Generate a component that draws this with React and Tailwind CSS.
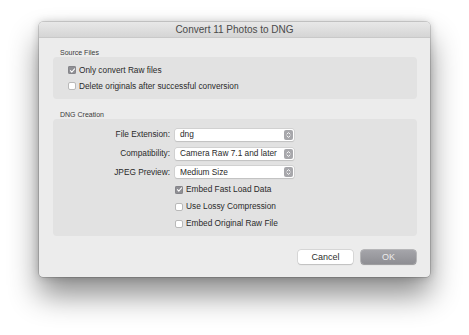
import React from 'react';

function Checkbox({ checked }) {
    return checked ? (
        <span className="flex h-[8px] w-[8px] items-center justify-center rounded-[2px] bg-[#8f8f94] shadow-[inset_0_0_0_0.5px_#7a7a7f]">
            <svg viewBox="0 0 8 8" className="h-[7px] w-[7px]">
                <path d="M1.6 4.2 L3.2 5.8 L6.4 2.2" fill="none" stroke="#fff" strokeWidth="1.2" strokeLinecap="round" strokeLinejoin="round" />
            </svg>
        </span>
    ) : (
        <span className="block h-[8px] w-[8px] rounded-[2px] border border-[#b9b9b9] bg-white" />
    );
}

function CheckRow({ checked, label, className = '' }) {
    return (
        <div className={`flex items-center gap-[3px] ${className}`}>
            <Checkbox checked={checked} />
            <span className="text-[8.3px] leading-none text-[#2a2a2a]">{label}</span>
        </div>
    );
}

function Select({ value }) {
    return (
        <div className="flex h-[12px] w-[119px] items-center justify-between rounded-[2px] bg-white pl-[5px] pr-[1px] shadow-[0_0_0_0.5px_#c4c4c4,0_0.5px_1px_rgba(0,0,0,0.15)]">
            <span className="text-[8.3px] leading-none text-[#2a2a2a]">{value}</span>
            <span className="flex h-[10px] w-[9px] items-center justify-center rounded-[2px] bg-[#a7a7ab]">
                <svg viewBox="0 0 9 10" className="h-[10px] w-[9px]">
                    <path d="M3 4 L4.5 2.6 L6 4" fill="none" stroke="#fff" strokeWidth="0.9" strokeLinecap="round" strokeLinejoin="round" />
                    <path d="M3 6 L4.5 7.4 L6 6" fill="none" stroke="#fff" strokeWidth="0.9" strokeLinecap="round" strokeLinejoin="round" />
                </svg>
            </span>
        </div>
    );
}

function SelectRow({ label, value, className = '' }) {
    return (
        <div className={`flex items-center gap-[5px] ${className}`}>
            <span className="w-[117px] text-right text-[8.3px] leading-none text-[#2a2a2a]">{label}</span>
            <Select value={value} />
        </div>
    );
}

export default function App() {
    return (
        <div className="h-[335px] w-[469px] bg-white pl-[39px] pt-[22px] font-['Liberation_Sans',Arial,sans-serif]">
            <div className="w-[391px] overflow-hidden rounded-[4px] bg-[#ececec] shadow-[0_18px_30px_rgba(0,0,0,0.45),0_0_8px_rgba(0,0,0,0.2),0_0_0_0.5px_#bdbdbd]">
                {/* Title bar */}
                <div className="flex h-[16px] items-center justify-center border-b border-[#c9c9c9] bg-gradient-to-b from-[#e8e8e8] to-[#d5d5d5]">
                    <span className="text-[10px] leading-none text-[#4a4a4a]">Convert 11 Photos to DNG</span>
                </div>

                <div className="pl-[14px] pr-[13px] pb-[13px]">
                    {/* Source Files */}
                    <div className="mt-[11px] pl-[7px] text-[7px] leading-[8px] text-[#3a3a3a]">Source Files</div>
                    <div className="rounded-[4px] bg-[#e2e2e2] pb-[5px] pl-[15px] pt-[5px]">
                        <CheckRow checked label="Only convert Raw files" className="h-[16px]" />
                        <CheckRow label="Delete originals after successful conversion" className="h-[16px]" />
                    </div>

                    {/* DNG Creation */}
                    <div className="mt-[12px] pl-[7px] text-[7px] leading-[8px] text-[#3a3a3a]">DNG Creation</div>
                    <div className="rounded-[4px] bg-[#e2e2e2] pb-[4px] pt-[6px]">
                        <SelectRow label="File Extension:" value="dng" className="h-[19px]" />
                        <SelectRow label="Compatibility:" value="Camera Raw 7.1 and later" className="h-[19px]" />
                        <SelectRow label="JPEG Preview:" value="Medium Size" className="h-[18px]" />
                        <div className="pl-[122px]">
                            <CheckRow checked label="Embed Fast Load Data" className="h-[17px]" />
                            <CheckRow label="Use Lossy Compression" className="h-[17px]" />
                            <CheckRow label="Embed Original Raw File" className="h-[17px]" />
                        </div>
                    </div>

                    {/* Buttons */}
                    <div className="mt-[14px] flex justify-end gap-[8px] pr-[1px]">
                        <button className="flex h-[14px] w-[55px] items-center justify-center rounded-[3px] bg-white text-[9px] leading-none text-[#2e2e2e] shadow-[0_0_0_0.5px_#c6c6c6,0_0.5px_1px_rgba(0,0,0,0.2)]">
                            Cancel
                        </button>
                        <button className="flex h-[14px] w-[55px] items-center justify-center rounded-[3px] bg-gradient-to-b from-[#a5a5aa] to-[#8e8e93] text-[9px] leading-none text-[#ececec] shadow-[0_0_0_0.5px_#85858a,0_0.5px_1px_rgba(0,0,0,0.25)]">
                            OK
                        </button>
                    </div>
                </div>
            </div>
        </div>
    );
}
